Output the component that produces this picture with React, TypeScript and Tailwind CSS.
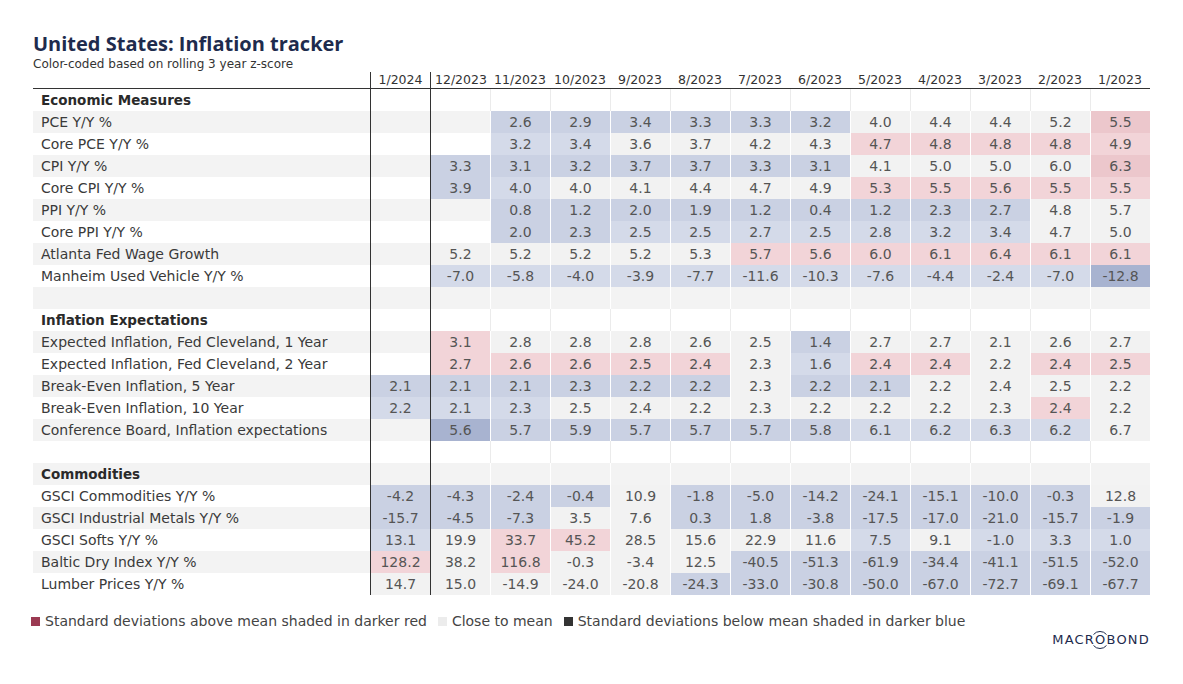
import React from "react";

const cols = ["1/2024", "12/2023", "11/2023", "10/2023", "9/2023", "8/2023", "7/2023", "6/2023", "5/2023", "4/2023", "3/2023", "2/2023", "1/2023"];

// cell codes: n = close to mean, b/l/B = blue shades, r/R = red shades
const shade: Record<string, string> = {
  n: "bg-[#f2f2f2]",
  b: "bg-[#cad1e3]",
  l: "bg-[#d4dae9]",
  B: "bg-[#a8b3d0]",
  r: "bg-[#f2d4d8]",
  R: "bg-[#ecc7cc]",
};

type Row = { label: string; kind: "section" | "data" | "blank"; cells?: string[] };

const rows: Row[] = [
  { label: "Economic Measures", kind: "section" },
  { label: "PCE Y/Y %", kind: "data", cells: ["", "", "2.6b", "2.9b", "3.4b", "3.3b", "3.3b", "3.2b", "4.0n", "4.4n", "4.4n", "5.2n", "5.5R"] },
  { label: "Core PCE Y/Y %", kind: "data", cells: ["", "", "3.2l", "3.4l", "3.6n", "3.7n", "4.2n", "4.3n", "4.7r", "4.8r", "4.8r", "4.8r", "4.9r"] },
  { label: "CPI Y/Y %", kind: "data", cells: ["", "3.3b", "3.1b", "3.2b", "3.7b", "3.7b", "3.3b", "3.1b", "4.1n", "5.0n", "5.0n", "6.0n", "6.3R"] },
  { label: "Core CPI Y/Y %", kind: "data", cells: ["", "3.9b", "4.0l", "4.0n", "4.1n", "4.4n", "4.7n", "4.9n", "5.3r", "5.5r", "5.6r", "5.5r", "5.5r"] },
  { label: "PPI Y/Y %", kind: "data", cells: ["", "", "0.8b", "1.2b", "2.0b", "1.9b", "1.2b", "0.4b", "1.2b", "2.3b", "2.7b", "4.8n", "5.7n"] },
  { label: "Core PPI Y/Y %", kind: "data", cells: ["", "", "2.0b", "2.3b", "2.5l", "2.5l", "2.7l", "2.5l", "2.8l", "3.2l", "3.4l", "4.7n", "5.0n"] },
  { label: "Atlanta Fed Wage Growth", kind: "data", cells: ["", "5.2n", "5.2n", "5.2n", "5.2n", "5.3n", "5.7r", "5.6r", "6.0r", "6.1r", "6.4r", "6.1r", "6.1r"] },
  { label: "Manheim Used Vehicle Y/Y %", kind: "data", cells: ["", "-7.0l", "-5.8l", "-4.0l", "-3.9l", "-7.7l", "-11.6l", "-10.3l", "-7.6l", "-4.4l", "-2.4l", "-7.0l", "-12.8B"] },
  { label: "", kind: "blank" },
  { label: "Inflation Expectations", kind: "section" },
  { label: "Expected Inflation, Fed Cleveland, 1 Year", kind: "data", cells: ["", "3.1r", "2.8n", "2.8n", "2.8n", "2.6n", "2.5n", "1.4b", "2.7n", "2.7n", "2.1n", "2.6n", "2.7n"] },
  { label: "Expected Inflation, Fed Cleveland, 2 Year", kind: "data", cells: ["", "2.7r", "2.6r", "2.6r", "2.5r", "2.4r", "2.3n", "1.6l", "2.4r", "2.4r", "2.2n", "2.4r", "2.5r"] },
  { label: "Break-Even Inflation, 5 Year", kind: "data", cells: ["2.1b", "2.1b", "2.1b", "2.3b", "2.2b", "2.2b", "2.3n", "2.2b", "2.1b", "2.2n", "2.4n", "2.5n", "2.2n"] },
  { label: "Break-Even Inflation, 10 Year", kind: "data", cells: ["2.2l", "2.1l", "2.3l", "2.5n", "2.4n", "2.2n", "2.3n", "2.2n", "2.2n", "2.2n", "2.3n", "2.4r", "2.2n"] },
  { label: "Conference Board, Inflation expectations", kind: "data", cells: ["", "5.6B", "5.7b", "5.9b", "5.7b", "5.7b", "5.7b", "5.8b", "6.1l", "6.2l", "6.3l", "6.2l", "6.7n"] },
  { label: "", kind: "blank" },
  { label: "Commodities", kind: "section" },
  { label: "GSCI Commodities Y/Y %", kind: "data", cells: ["-4.2b", "-4.3b", "-2.4b", "-0.4b", "10.9n", "-1.8b", "-5.0b", "-14.2b", "-24.1b", "-15.1b", "-10.0b", "-0.3b", "12.8n"] },
  { label: "GSCI Industrial Metals Y/Y %", kind: "data", cells: ["-15.7b", "-4.5b", "-7.3b", "3.5n", "7.6n", "0.3b", "1.8b", "-3.8b", "-17.5b", "-17.0b", "-21.0b", "-15.7b", "-1.9b"] },
  { label: "GSCI Softs Y/Y %", kind: "data", cells: ["13.1l", "19.9n", "33.7r", "45.2r", "28.5n", "15.6n", "22.9n", "11.6n", "7.5l", "9.1n", "-1.0l", "3.3l", "1.0l"] },
  { label: "Baltic Dry Index Y/Y %", kind: "data", cells: ["128.2r", "38.2n", "116.8r", "-0.3n", "-3.4n", "12.5n", "-40.5b", "-51.3b", "-61.9b", "-34.4b", "-41.1b", "-51.5b", "-52.0b"] },
  { label: "Lumber Prices Y/Y %", kind: "data", cells: ["14.7n", "15.0n", "-14.9n", "-24.0n", "-20.8n", "-24.3b", "-33.0b", "-30.8b", "-50.0b", "-67.0b", "-72.7b", "-69.1b", "-67.7b"] },
];

function Cell({ value, col, striped }: { value: string; col: number; striped: boolean }) {
  const code = value ? value.slice(-1) : "";
  const text = value ? value.slice(0, -1) : "";
  const bg = code ? shade[code] : "";
  let border = "border-[#ebebeb]";
  if (col < 2) border = "border-[#333]";
  else if (code || striped) border = "border-white";
  return (
    <div className={`w-[60px] h-[22px] border-l ${border} ${bg} flex items-center justify-center text-[14px] text-[#555]`}>
      {text}
    </div>
  );
}

function Logo() {
  return (
    <div className="flex items-center text-[13px] leading-[16px] tracking-[1.2px] text-[#1e2b4d]">
      <span>MACR</span>
      <span className="relative">
        O
        <svg className="absolute left-[-5px] top-[-4px]" width="20" height="24" viewBox="0 0 20 24">
          <path d="M3.5 6.5 A8.5 8.5 0 0 1 16.5 6.5" fill="none" stroke="#1e2b4d" strokeWidth="1" />
          <path d="M3.5 17.5 A8.5 8.5 0 0 0 16.5 17.5" fill="none" stroke="#1e2b4d" strokeWidth="1" />
        </svg>
      </span>
      <span>BOND</span>
    </div>
  );
}

export default function App() {
  return (
    <div className="w-[1183px] h-[684px] bg-white pl-[33px] pt-[32px] font-['DejaVu_Sans',sans-serif] text-[#333]">
      <h1 className="font-['Open_Sans',sans-serif] text-[20px] leading-[24px] font-bold text-[#1e2b4d]">
        United States: Inflation tracker
      </h1>
      <p className="text-[12px] leading-[16px] text-[#333]">Color-coded based on rolling 3 year z-score</p>

      <div className="w-[1117px]">
        <div className="flex h-[17px] border-b border-[#333]">
          <div className="w-[337px]" />
          {cols.map((c, i) => (
            <div
              key={c}
              className={`w-[60px] h-[16px] px-[4px] overflow-hidden whitespace-nowrap text-center text-[12.5px] leading-[16px] text-[#333] ${i < 2 ? "border-l border-[#333]" : ""}`}
            >
              {c}
            </div>
          ))}
        </div>

        {rows.map((r, idx) => {
          const striped = idx % 2 === 1;
          const cells = r.cells ?? cols.map(() => "");
          return (
            <div key={idx} className={`flex h-[22px] ${striped ? "bg-[#f3f3f3]" : ""}`}>
              <div
                className={`w-[337px] pl-[8px] flex items-center whitespace-nowrap ${r.kind === "section" ? "text-[13.5px] font-bold text-[#2a2a2a]" : "text-[14px] text-[#3a3a3a]"}`}
              >
                {r.label}
              </div>
              {cells.map((v, i) => (
                <Cell key={i} value={v} col={i} striped={striped} />
              ))}
            </div>
          );
        })}
      </div>

      <div className="mt-[17px] flex items-center gap-[11px] text-[14px] leading-[18px] text-[#444]">
        <div className="flex items-center gap-[5px] -ml-[2px]">
          <span className="w-[9px] h-[9px] bg-[#9b3a52]" />
          <span>Standard deviations above mean shaded in darker red</span>
        </div>
        <div className="flex items-center gap-[5px]">
          <span className="w-[9px] h-[9px] bg-[#ececec]" />
          <span>Close to mean</span>
        </div>
        <div className="flex items-center gap-[5px]">
          <span className="w-[9px] h-[9px] bg-[#333]" />
          <span>Standard deviations below mean shaded in darker blue</span>
        </div>
      </div>

      <div className="w-[1117px] flex justify-end mt-[2px]">
        <Logo />
      </div>
    </div>
  );
}
